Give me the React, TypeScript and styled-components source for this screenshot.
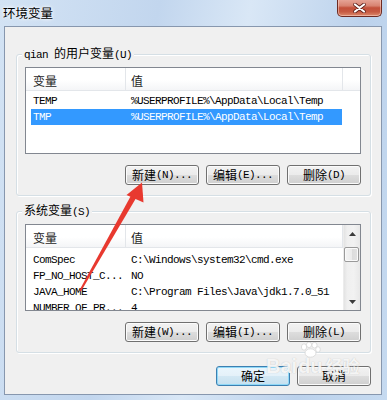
import styled, { createGlobalStyle } from 'styled-components';

const CJK_RE = /([\u3400-\u9fff]+)/;

type EnvVar = { name: string; value: string };

const USER_VARS: EnvVar[] = [
  { name: 'TEMP', value: '%USERPROFILE%\\AppData\\Local\\Temp' },
  { name: 'TMP', value: '%USERPROFILE%\\AppData\\Local\\Temp' },
];

const SYSTEM_VARS: EnvVar[] = [
  { name: 'ComSpec', value: 'C:\\Windows\\system32\\cmd.exe' },
  { name: 'FP_NO_HOST_C...', value: 'NO' },
  { name: 'JAVA_HOME', value: 'C:\\Program Files\\Java\\jdk1.7.0_51' },
  { name: 'NUMBER_OF_PR...', value: '4' },
];

// SimSun-ish mix: half width latin, full width han
const Label = ({ text }: { text: string }) => (
  <>
    {text.split(CJK_RE).map((part, i) =>
      CJK_RE.test(part) ? <Han key={i}>{part}</Han> : part,
    )}
  </>
);

const VarList = ({
  rows,
  selected,
  offset,
  scroll,
}: {
  rows: EnvVar[];
  selected?: number;
  offset: number;
  scroll?: boolean;
}) => (
  <List>
    <ListMain>
      <Header>
        <HeaderCell $width="100px" $pad="7px">变量</HeaderCell>
        <HeaderCell $width="217px" $pad="5px">值</HeaderCell>
        <HeaderFiller />
      </Header>
      <Rows $offset={offset}>
        {rows.map((row, i) => (
          <Row key={row.name} $selected={i === selected}>
            <NameCell>{row.name}</NameCell>
            <ValueCell>{row.value}</ValueCell>
          </Row>
        ))}
      </Rows>
    </ListMain>
    {scroll && (
      <ScrollBar>
        <ScrollArrow>
          <svg width="7" height="4" viewBox="0 0 7 4">
            <polygon points="3.5,0 7,4 0,4" fill="#3b3b3b" />
          </svg>
        </ScrollArrow>
        <Thumb />
        <Track />
        <ScrollArrow>
          <svg width="7" height="4" viewBox="0 0 7 4">
            <polygon points="0,0 7,0 3.5,4" fill="#3b3b3b" />
          </svg>
        </ScrollArrow>
      </ScrollBar>
    )}
  </List>
);

const App = () => (
  <>
    <GlobalStyle />
    <Window>
      <TitleBar>
        <Title>环境变量</Title>
        <CloseButton>
          <svg width="13" height="10" viewBox="0 0 13 10">
            <path d="M2 1.5 L11 8.5 M11 1.5 L2 8.5" stroke="#5a1d17" strokeWidth="3.6" strokeLinecap="round" />
            <path d="M2 1.5 L11 8.5 M11 1.5 L2 8.5" stroke="#ffffff" strokeWidth="2.2" strokeLinecap="round" />
          </svg>
        </CloseButton>
      </TitleBar>
      <Client>
        <Group>
          <Legend>
            <Label text="qian 的用户变量(U)" />
          </Legend>
          <VarList rows={USER_VARS} selected={1} offset={2} />
          <ButtonRow>
            <Button><Label text="新建(N)..." /></Button>
            <Button><Label text="编辑(E)..." /></Button>
            <Button><Label text="删除(D)" /></Button>
          </ButtonRow>
        </Group>
        <Group>
          <Legend>
            <Label text="系统变量(S)" />
          </Legend>
          <VarList rows={SYSTEM_VARS} offset={4} scroll />
          <ButtonRow>
            <Button><Label text="新建(W)..." /></Button>
            <Button><Label text="编辑(I)..." /></Button>
            <Button><Label text="删除(L)" /></Button>
          </ButtonRow>
        </Group>
        <DialogButtons>
          <Button $default><Label text="确定" /></Button>
          <Button><Label text="取消" /></Button>
        </DialogButtons>
      </Client>

      <Watermark>
        <span>Bai</span>
        <Paw>
          <svg width="22" height="16" viewBox="0 0 22 16">
            <ellipse cx="5" cy="5" rx="2.6" ry="3.2" fill="#fff" stroke="#d6d6d6" strokeWidth="0.8" />
            <ellipse cx="10" cy="2.8" rx="2.6" ry="2.8" fill="#fff" stroke="#d6d6d6" strokeWidth="0.8" />
            <ellipse cx="15.5" cy="3.2" rx="2.6" ry="2.8" fill="#fff" stroke="#d6d6d6" strokeWidth="0.8" />
            <ellipse cx="19" cy="7.5" rx="2.3" ry="2.8" fill="#fff" stroke="#d6d6d6" strokeWidth="0.8" />
            <ellipse cx="11.5" cy="11" rx="5.5" ry="4.2" fill="#fff" stroke="#d6d6d6" strokeWidth="0.8" />
          </svg>
          <span>du</span>
        </Paw>
        <WatermarkHan>经验</WatermarkHan>
      </Watermark>

      <ArrowLayer width="387" height="400" viewBox="0 0 387 400">
        <polygon points="79.3,290.6 80.9,291.4 136.4,197.4 131.6,194.6" fill="#e8392f" />
        <polygon points="142,182.5 126.5,195 143.5,202.5" fill="#e8392f" />
      </ArrowLayer>
    </Window>
  </>
);

export default App;

const GlobalStyle = createGlobalStyle`
  html, body {
    margin: 0;
    padding: 0;
  }
  body {
    background: #c3d7ee;
    overflow: hidden;
  }
  * {
    box-sizing: border-box;
  }
`;

const Window = styled.div`
  position: relative;
  width: 387px;
  height: 400px;
  display: flex;
  flex-direction: column;
  overflow: hidden;
  background: linear-gradient(100deg, #d3e3f4 0%, #c2d6ee 35%, #d9e7f6 55%, #bcd2ec 80%, #c6daf0 100%);
  font-family: 'Liberation Mono', 'Noto Sans CJK SC', monospace;
  font-size: 11px;
  letter-spacing: -0.6px;
  color: #000;
`;

const Han = styled.span`
  font-family: 'Noto Sans CJK SC', sans-serif;
  font-size: 12px;
  letter-spacing: 0;
`;

const TitleBar = styled.div`
  height: 26px;
  flex: none;
  display: flex;
  align-items: flex-start;
  padding: 0 5px 0 3px;
`;

const Title = styled.div`
  margin-top: 4px;
  font-family: 'Noto Sans CJK SC', sans-serif;
  font-size: 12.5px;
  line-height: 17px;
  letter-spacing: 0;
  color: #000;
  text-shadow: 0 0 5px #fff, 0 0 3px #fff;
`;

const CloseButton = styled.div`
  margin-left: auto;
  margin-top: -1px;
  width: 45px;
  height: 18px;
  display: flex;
  align-items: center;
  justify-content: center;
  border: 1px solid #6d2a22;
  border-top: none;
  border-radius: 0 0 5px 5px;
  background: linear-gradient(#e8a99c 0%, #d88371 40%, #c3503a 52%, #c65a42 75%, #dd8a6c 100%);
  box-shadow: inset 0 0 0 1px rgba(255, 220, 210, 0.5);
`;

const Client = styled.div`
  flex: 1;
  margin: 0 5px 5px 4px;
  padding: 19px 10px 0 11px;
  display: flex;
  flex-direction: column;
  background: #f0f0f0;
  border: 1px solid #8797ae;
`;

const Group = styled.fieldset`
  margin: 0;
  padding: 5px 9px 10px 8px;
  min-width: 0;
  border: 1px solid #d5dfe5;
  border-radius: 3px;
  box-shadow: inset 1px 1px 0 #fff, 1px 1px 0 #fff;

  & + & {
    margin-top: 7px;
  }
`;

const Legend = styled.legend`
  margin-left: -3px;
  padding: 0 2px;
  line-height: 14px;
  background: #f0f0f0;
`;

const List = styled.div`
  height: 87px;
  display: flex;
  overflow: hidden;
  background: #fff;
  border: 1px solid #828790;
`;

const ListMain = styled.div`
  flex: 1;
  min-width: 0;
  display: flex;
  flex-direction: column;
`;

const Header = styled.div`
  height: 23px;
  flex: none;
  display: flex;
  background: linear-gradient(#ffffff 0%, #ffffff 55%, #f4f5f7 100%);
  border-bottom: 1px solid #e3e6ea;
`;

const HeaderCell = styled.div<{ $width: string; $pad: string }>`
  width: ${({ $width }) => $width};
  flex: none;
  padding: 5px 0 0 ${({ $pad }) => $pad};
  line-height: 16px;
  font-family: 'Noto Sans CJK SC', sans-serif;
  font-size: 12px;
  letter-spacing: 0;
  color: #1e1e1e;
  border-right: 1px solid #e3e6ea;
`;

const HeaderFiller = styled.div`
  flex: 1;
`;

const Rows = styled.div<{ $offset: number }>`
  padding-top: ${({ $offset }) => $offset}px;
  padding-left: 5px;
`;

const Row = styled.div<{ $selected?: boolean }>`
  display: flex;
  width: 311px;
  height: 16px;
  line-height: 16px;
  white-space: nowrap;
  background: ${({ $selected }) => ($selected ? '#3399ff' : 'transparent')};
  color: ${({ $selected }) => ($selected ? '#fff' : '#000')};
`;

const NameCell = styled.div`
  width: 94px;
  flex: none;
  padding-left: 2px;
  overflow: hidden;
`;

const ValueCell = styled.div`
  width: 217px;
  flex: none;
  padding-left: 6px;
  overflow: hidden;
`;

const ScrollBar = styled.div`
  width: 17px;
  flex: none;
  display: flex;
  flex-direction: column;
  background: linear-gradient(to right, #e3e3e3 0%, #efefef 20%, #f2f2f2 60%, #e8e8e8 100%);
  border-left: 1px solid #ececec;
`;

const ScrollArrow = styled.div`
  height: 17px;
  flex: none;
  display: flex;
  align-items: center;
  justify-content: center;
`;

const Thumb = styled.div`
  height: 15px;
  flex: none;
  margin: 5px 1px 0 0;
  border: 1px solid #9a9a9a;
  border-radius: 2px;
  background: linear-gradient(to right, #f4f4f4 0%, #ececec 50%, #dcdcdc 51%, #e2e2e2 100%);
  box-shadow: inset 0 0 0 1px #fafafa;
`;

const Track = styled.div`
  flex: 1;
`;

const ButtonRow = styled.div`
  display: flex;
  justify-content: flex-end;
  gap: 7px;
  margin-top: 11px;
`;

const DialogButtons = styled(ButtonRow)`
  margin-top: 13px;
`;

const Button = styled.div<{ $default?: boolean }>`
  width: 74px;
  height: 20px;
  display: flex;
  align-items: center;
  justify-content: center;
  line-height: 16px;
  border: 1px solid ${({ $default }) => ($default ? '#3c7fb1' : '#707070')};
  border-radius: 3px;
  background: ${({ $default }) =>
    $default
      ? 'linear-gradient(#eaf6fd 0%, #e4f1f9 50%, #d3e8f4 51%, #c6e0ef 100%)'
      : 'linear-gradient(#f2f2f2 0%, #ebebeb 50%, #dddddd 51%, #cfcfcf 100%)'};
  box-shadow: inset 0 0 0 1px ${({ $default }) => ($default ? '#8fd8f7' : '#fbfbfb')};
  color: #000;
`;

const Watermark = styled.div`
  position: absolute;
  left: 266px;
  top: 342px;
  display: flex;
  align-items: flex-end;
  font-family: 'Liberation Sans', Arial, sans-serif;
  font-weight: bold;
  font-size: 20px;
  line-height: 20px;
  letter-spacing: 0;
  color: rgba(255, 255, 255, 0.85);
  text-shadow: 0 0 1px rgba(150, 150, 150, 0.6);
  pointer-events: none;
`;

const Paw = styled.div`
  display: flex;
  flex-direction: column;
  align-items: center;
  margin-left: 1px;
  svg {
    margin-bottom: -2px;
  }
`;

const WatermarkHan = styled.span`
  margin-left: 3px;
  font-family: 'Noto Sans CJK SC', sans-serif;
  font-size: 17px;
  line-height: 20px;
`;

const ArrowLayer = styled.svg`
  position: absolute;
  left: 0;
  top: 0;
  pointer-events: none;
`;
